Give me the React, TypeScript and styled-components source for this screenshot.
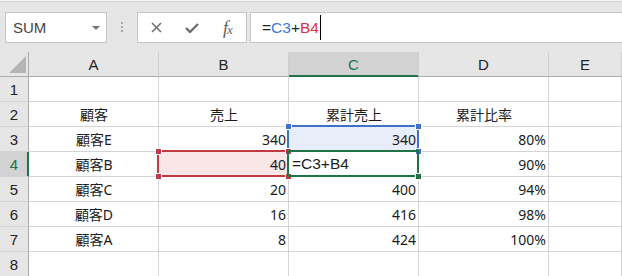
import styled, { createGlobalStyle } from 'styled-components';

const COL_W = 130;
const ROW_H = 25;
const HEAD_W = 29;
const GREEN = '#217346';
const BLUE = '#3f72c6';
const RED = '#c23a40';

type Align = 'left' | 'center' | 'right';

const columns = ['A', 'B', 'C', 'D', 'E'];

const data: string[][] = [
  ['', '', '', ''],
  ['顧客', '売上', '累計売上', '累計比率'],
  ['顧客E', '340', '340', '80%'],
  ['顧客B', '40', '=C3+B4', '90%'],
  ['顧客C', '20', '400', '94%'],
  ['顧客D', '16', '416', '98%'],
  ['顧客A', '8', '424', '100%'],
  ['', '', '', ''],
];

const GlobalStyle = createGlobalStyle`
  html, body {
    margin: 0;
    padding: 0;
    background: #fff;
    overflow: hidden;
  }
  body {
    font-family: 'Noto Sans', 'Noto Sans CJK JP', sans-serif;
    color: #1c1c1c;
  }
`;

const Toolbar = styled.div`
  height: 52px;
  box-sizing: border-box;
  display: flex;
  align-items: flex-start;
  padding: 11px 0 0 5px;
  background: #e6e6e6;
  border-top: 1px solid #f4f4f4;
  box-shadow: inset 0 1px 0 #d8d8d8;
`;

const Box = styled.div`
  height: 31px;
  box-sizing: border-box;
  background: #fff;
  border: 1px solid #c6c6c6;
  display: flex;
  align-items: center;
`;

const NameBox = styled(Box)`
  width: 102px;
  padding: 0 6px 0 7px;
  justify-content: space-between;
  font-family: 'Liberation Sans', Arial, sans-serif;
  font-size: 15px;
  color: #454545;
`;

const Dots = styled.div`
  display: flex;
  flex-direction: column;
  gap: 2px;
  margin: 10px 0 0 14px;
  span {
    width: 2px;
    height: 2px;
    background: #a8a8a8;
  }
`;

const ButtonGroup = styled(Box)`
  width: 110px;
  margin-left: 14px;
`;

const IconButton = styled.div`
  width: 36px;
  height: 100%;
  display: flex;
  align-items: center;
  justify-content: center;
  color: #6e6e6e;
`;

const Fx = styled.span`
  font-family: 'Liberation Serif', 'Times New Roman', serif;
  font-style: italic;
  font-size: 18px;
  line-height: 1;
  color: #606060;
  sub {
    font-size: 13px;
    vertical-align: 0;
    margin-left: -1px;
  }
`;

const FormulaBar = styled(Box)`
  flex: 1;
  margin-left: 3px;
  border-right: none;
  padding-left: 11px;
  font-family: 'Liberation Sans', Arial, sans-serif;
  font-size: 15.5px;
  color: #222;
`;

const Ref = styled.span<{ $color: string }>`
  color: ${(p) => p.$color};
`;

const Caret = styled.span`
  display: inline-block;
  width: 1px;
  height: 25px;
  background: #000;
  margin-left: 1px;
`;

const Sheet = styled.div`
  position: relative;
  display: grid;
  grid-template-columns: ${HEAD_W}px repeat(4, ${COL_W}px) 1fr;
  grid-auto-rows: ${ROW_H}px;
  font-size: 14px;
`;

const Corner = styled.div`
  background: #e6e6e6;
  border-right: 1px solid #ababab;
  border-bottom: 1px solid #ababab;
  display: flex;
  align-items: flex-end;
  justify-content: flex-end;
  padding: 0 2px 3px 0;
`;

const ColHead = styled.div<{ $active?: boolean }>`
  background: ${(p) => (p.$active ? '#d2d2d2' : '#e6e6e6')};
  color: ${(p) => (p.$active ? GREEN : '#222')};
  border-right: 1px solid #cfcfcf;
  border-bottom: 1px solid ${(p) => (p.$active ? GREEN : '#ababab')};
  box-shadow: ${(p) => (p.$active ? `inset 0 -1px 0 ${GREEN}` : 'none')};
  display: flex;
  align-items: center;
  justify-content: center;
  font-family: 'Liberation Sans', Arial, sans-serif;
  font-size: 15px;
`;

const RowHead = styled.div<{ $active?: boolean }>`
  background: ${(p) => (p.$active ? '#d2d2d2' : '#e6e6e6')};
  color: ${(p) => (p.$active ? GREEN : '#222')};
  border-right: 1px solid ${(p) => (p.$active ? GREEN : '#ababab')};
  box-shadow: ${(p) => (p.$active ? `inset -1px 0 0 ${GREEN}` : 'none')};
  border-bottom: 1px solid #d4d4d4;
  display: flex;
  align-items: center;
  justify-content: center;
  font-family: 'Liberation Sans', Arial, sans-serif;
  font-size: 15px;
`;

const Cell = styled.div<{ $align: Align; $fill?: string; $formula?: boolean }>`
  background: ${(p) => p.$fill ?? '#fff'};
  border-right: 1px solid #d4d4d4;
  border-bottom: 1px solid #d4d4d4;
  display: flex;
  align-items: center;
  justify-content: ${(p) =>
    p.$align === 'left' ? 'flex-start' : p.$align === 'right' ? 'flex-end' : 'center'};
  padding: 0 2px 0 3px;
  white-space: nowrap;
  overflow: hidden;
  font-family: ${(p) =>
    p.$formula ? "'Liberation Sans', Arial, sans-serif" : 'inherit'};
  font-size: ${(p) => (p.$formula ? '15.5px' : 'inherit')};
`;

const Frame = styled.div<{ $color: string }>`
  position: absolute;
  box-sizing: border-box;
  width: ${COL_W + 2}px;
  height: ${ROW_H + 2}px;
  border: 2px solid ${(p) => p.$color};
  pointer-events: none;
`;

const Handle = styled.div<{ $color: string }>`
  position: absolute;
  width: 5px;
  height: 5px;
  background: ${(p) => p.$color};
  border: 1px solid #fff;
`;

const cellX = (c: number) => HEAD_W + COL_W * c;
const cellY = (r: number) => ROW_H * r;

const RefFrame = ({ col, row, color, corners }: { col: number; row: number; color: string; corners: boolean }) => {
  const x = cellX(col);
  const y = cellY(row);
  const pts = corners
    ? [
        [x - 1, y - 1],
        [x + COL_W - 1, y - 1],
        [x - 1, y + ROW_H - 1],
        [x + COL_W - 1, y + ROW_H - 1],
      ]
    : [[x + COL_W - 1, y + ROW_H - 1]];
  return (
    <>
      <Frame $color={color} style={{ left: x - 2, top: y - 2 }} />
      {pts.map(([px, py], i) => (
        <Handle key={i} $color={color} style={{ left: px - 3, top: py - 3 }} />
      ))}
    </>
  );
};

const alignFor = (r: number, c: number, v: string): Align => {
  if (r === 1 || c === 0) return 'center';
  if (v.startsWith('=')) return 'left';
  return 'right';
};

const fillFor = (r: number, c: number) => {
  if (r === 2 && c === 2) return '#e7eef9';
  if (r === 3 && c === 1) return '#f9e7e8';
  return undefined;
};

export default function App() {
  return (
    <>
      <GlobalStyle />
      <Toolbar>
        <NameBox>
          <span>SUM</span>
          <svg width="8" height="4" viewBox="0 0 8 4">
            <path d="M0 0 H8 L4 4 Z" fill="#777" />
          </svg>
        </NameBox>
        <Dots>
          <span />
          <span />
          <span />
        </Dots>
        <ButtonGroup>
          <IconButton>
            <svg width="11" height="11" viewBox="0 0 11 11">
              <path d="M1 1 L10 10 M10 1 L1 10" stroke="#6e6e6e" strokeWidth="1.5" />
            </svg>
          </IconButton>
          <IconButton>
            <svg width="14" height="10" viewBox="0 0 14 10">
              <path d="M1 5 L5 9 L13 1" stroke="#6e6e6e" strokeWidth="2.4" fill="none" />
            </svg>
          </IconButton>
          <IconButton>
            <Fx>
              f<sub>x</sub>
            </Fx>
          </IconButton>
        </ButtonGroup>
        <FormulaBar>
          =<Ref $color="#3b78d8">C3</Ref>+<Ref $color="#d9363e">B4</Ref>
          <Caret />
        </FormulaBar>
      </Toolbar>
      <Sheet>
        <Corner>
          <svg width="17" height="17" viewBox="0 0 17 17">
            <path d="M17 0 V17 H0 Z" fill="#b4b4b4" />
          </svg>
        </Corner>
        {columns.map((c) => (
          <ColHead key={c} $active={c === 'C'}>
            {c}
          </ColHead>
        ))}
        {data.map((row, r) => (
          <>
            <RowHead key={`h${r}`} $active={r === 3}>
              {r + 1}
            </RowHead>
            {row.map((v, c) => (
              <Cell
                key={`${r}-${c}`}
                $align={alignFor(r, c, v)}
                $fill={fillFor(r, c)}
                $formula={v.startsWith('=')}
              >
                {v}
              </Cell>
            ))}
            <Cell key={`${r}-e`} $align="left" />
          </>
        ))}
        <RefFrame col={2} row={3} color={BLUE} corners />
        <RefFrame col={1} row={4} color={RED} corners />
        <RefFrame col={2} row={4} color={GREEN} corners={false} />
      </Sheet>
    </>
  );
}
